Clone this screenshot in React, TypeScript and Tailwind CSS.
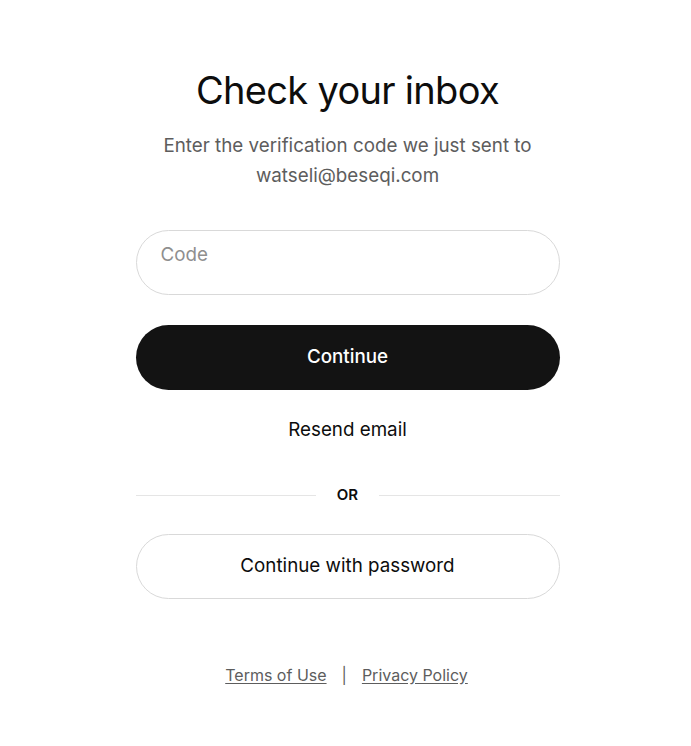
import React from 'react';

const App = () => {
  return (
    <div className="min-h-screen bg-white font-['Inter','Noto_Sans',sans-serif] text-[#0d0d0d]">
      <div className="mx-auto flex w-[424px] translate-x-[2px] flex-col items-center pt-[66px]">
        <h1 className="text-[38px] leading-[48px] font-normal tracking-[-0.7px] text-[#0d0d0d]">Check your inbox</h1>
        <p className="mt-[17px] text-center text-[18.8px] leading-[30px] text-[#5d5d5d]">
          Enter the verification code we just sent to
          <br />
          watseli@beseqi.com
        </p>

        <div className="mt-[39px] h-[65px] w-full rounded-full border border-[#d9d9d9] px-[24px] pt-[12px]">
          <input
            type="text"
            placeholder="Code"
            className="w-full bg-transparent text-[18.8px] leading-[22px] text-[#0d0d0d] outline-none placeholder:text-[#8f8f8f]"
          />
        </div>

        <button className="mt-[30px] h-[65px] w-full rounded-full bg-[#131313] text-[18.8px] font-medium text-white">
          Continue
        </button>

        <button className="mt-[26px] text-[18.8px] leading-[28px] text-[#0d0d0d]">Resend email</button>

        {/* divider */}
        <div className="mt-[41px] flex w-full items-center">
          <div className="h-px flex-1 bg-[#e5e5e5]" />
          <span className="px-[21px] text-[15px] leading-[20px] font-semibold text-[#0d0d0d]">OR</span>
          <div className="h-px flex-1 bg-[#e5e5e5]" />
        </div>

        <button className="mt-[29px] h-[65px] w-full rounded-full border border-[#d9d9d9] text-[18.8px] text-[#0d0d0d]">
          Continue with password
        </button>

        <div className="mt-[64px] flex -translate-x-[1px] items-center gap-[15px] text-[16px] text-[#5d5d5d]">
          <a href="#" className="underline underline-offset-2">Terms of Use</a>
          <span className="text-[#5d5d5d]">|</span>
          <a href="#" className="underline underline-offset-2">Privacy Policy</a>
        </div>
      </div>
    </div>
  );
};

export default App;
